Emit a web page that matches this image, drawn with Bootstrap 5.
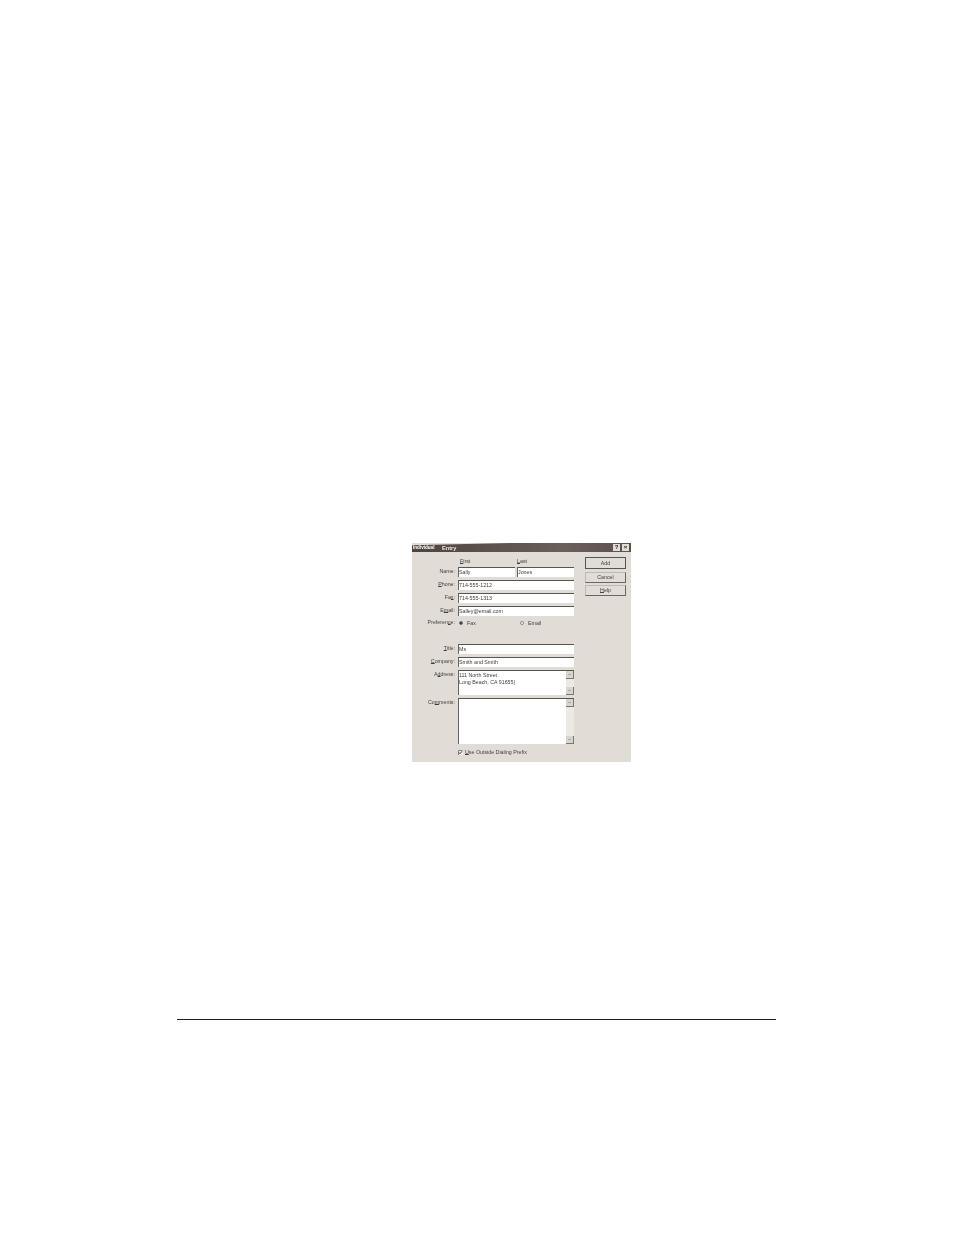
<!DOCTYPE html>
<html lang="en">
<head>
<meta charset="utf-8">
<title>Entry</title>
<link rel="stylesheet" href="https://cdn.jsdelivr.net/npm/bootstrap@5.3.0/dist/css/bootstrap.min.css">
<style>
html,body{background:#fff;margin:0;height:1235px;overflow:hidden}
.sheet{padding-top:543px;font-family:"Liberation Sans",Arial,sans-serif}
.dlg{width:219px;height:219px;margin-left:412px;background:#e1dcd5;color:#403d3b;font-size:5.3px;line-height:7px;filter:blur(.35px)}
.dlg-title{height:9px;background:linear-gradient(90deg,#4d443e,#6a6059 70%,#5b514a);color:#efe9e2;padding:0 2px 0 1px;font-weight:700;font-size:5.6px;line-height:8px;clip-path:polygon(0 25%,45% 0,100% 0,100% 100%,0 100%)}
.hidden-name{color:#fff;width:25px;overflow:hidden;white-space:nowrap;font-size:4.6px}
.cap-btn{width:7px;height:7px;background:#e1dcd5;color:#222;font-size:6px;line-height:7px;text-align:center;font-weight:700}
.capset{gap:2px}
.dlg-body{padding-top:5px}
.fields{width:162px}
.frow{display:flex;align-items:flex-start}
.lbl{width:43px;margin-right:3px;text-align:right;flex:none;line-height:8px}
.lbl u,.btn-dlg u,.chk u,.heads u{text-decoration-thickness:.3px;text-underline-offset:.3px}
.fld.form-control{flex:1;min-width:0;height:10px;min-height:0;padding:1px 0 0 0;font-size:5.3px;line-height:7px;color:#403d3b;background:#fff;border:0;border-top:1.4px solid #555;border-left:1px solid #666;border-radius:0;box-shadow:none;white-space:pre-line;overflow:hidden}
.heads{height:10px;padding:1px 0 0 2px;margin-left:46px;display:flex}
.heads>span{width:59px}
.namepair{gap:2px}
.gap-r{margin-bottom:3px}
.pref{height:8px;margin-top:2px;margin-bottom:18px;line-height:8px}
.opt{width:60px;flex:none;display:flex;align-items:center;gap:4px;padding-top:1px;margin-left:1px}
.dot{width:4px;height:4px;border-radius:50%;background:#fff;border:1px solid #8a8580;flex:none}
.dot.on{background:#333;border-color:#777}
.multi{position:relative}
.h-addr{height:25px!important}
.h-com{height:46px!important}
.sb{position:absolute;right:0;top:0;bottom:0;width:8px;background:#ece8e2;display:flex;flex-direction:column;justify-content:space-between}
.sb i{display:block;height:8px;background:#d9d4cd;border-right:1px solid #777;border-bottom:1px solid #777;position:relative}
.sb i::after{content:"";position:absolute;left:2px;top:3px;width:3px;height:1px;background:#aaa}
.chk{margin-left:46px;margin-top:5px;display:flex;align-items:center;gap:2px}
.box{width:5px;height:5px;flex:none;display:block}
.btns{width:41px;margin-left:11px;gap:2.5px}
.btn-dlg.btn{--bs-btn-padding-x:0;--bs-btn-padding-y:0;width:41px;height:11px;padding:0;font-size:5.3px;line-height:9px;color:#403d3b;background:#e1dcd5;border:1px solid;border-color:#bdb8b1 #6a6560 #6a6560 #bdb8b1;border-radius:0;text-align:center}
.btn-dlg.dft{height:12px;border:1.4px solid #555;line-height:9px}
.rule{width:599px;margin:257px 0 0 177px;height:1.4px;background:#222;opacity:1;border:0}
</style>
</head>
<body>
<div class="sheet">
  <div class="dlg">
    <div class="dlg-title d-flex align-items-center">
      <span class="hidden-name">Individual</span><span class="ms-1">Entry</span>
      <span class="ms-auto d-flex capset"><span class="cap-btn">?</span><span class="cap-btn">×</span></span>
    </div>
    <div class="dlg-body d-flex">
      <div class="fields">
        <div class="heads"><span><u>F</u>irst</span><span><u>L</u>ast</span></div>
        <div class="frow gap-r"><span class="lbl">Name:</span><div class="d-flex flex-grow-1 namepair"><div class="fld form-control">Sally</div><div class="fld form-control">Jones</div></div></div>
        <div class="frow gap-r"><span class="lbl"><u>P</u>hone:</span><div class="fld form-control">714-555-1212</div></div>
        <div class="frow gap-r"><span class="lbl">Fa<u>x</u>:</span><div class="fld form-control">714-555-1313</div></div>
        <div class="frow"><span class="lbl">E<u>m</u>ail:</span><div class="fld form-control">Salley@email.com</div></div>
        <div class="frow pref"><span class="lbl">Preferen<u>c</u>e:</span><span class="opt"><span class="dot on"></span>Fax</span><span class="opt"><span class="dot"></span>Email</span></div>
        <div class="frow gap-r"><span class="lbl"><u>T</u>itle:</span><div class="fld form-control">Ms</div></div>
        <div class="frow gap-r"><span class="lbl"><u>C</u>ompany:</span><div class="fld form-control">Smith and Smith</div></div>
        <div class="frow gap-r"><span class="lbl">A<u>d</u>dress:</span><div class="fld form-control multi h-addr">111 North Street
Long Beach, CA 91655|<span class="sb"><i></i><i></i></span></div></div>
        <div class="frow"><span class="lbl">Co<u>m</u>ments:</span><div class="fld form-control multi h-com"><span class="sb"><i></i><i></i></span></div></div>
        <div class="chk"><svg class="box" viewBox="0 0 5 5"><rect width="5" height="5" fill="#f4f1ec"/><path d="M.5 5V.5H4.5" fill="none" stroke="#666" stroke-width=".8"/><path d="M1 2.5 2 3.7 4 1.3" fill="none" stroke="#222" stroke-width=".9"/></svg><span><u>U</u>se Outside Dialing Prefix</span></div>
      </div>
      <div class="btns d-flex flex-column">
        <button type="button" class="btn btn-dlg dft"><u>A</u>dd</button>
        <button type="button" class="btn btn-dlg">Cancel</button>
        <button type="button" class="btn btn-dlg"><u>H</u>elp</button>
      </div>
    </div>
  </div>
  <hr class="rule">
</div>
<script src="https://cdn.jsdelivr.net/npm/bootstrap@5.3.0/dist/js/bootstrap.bundle.min.js"></script>
</body>
</html>
